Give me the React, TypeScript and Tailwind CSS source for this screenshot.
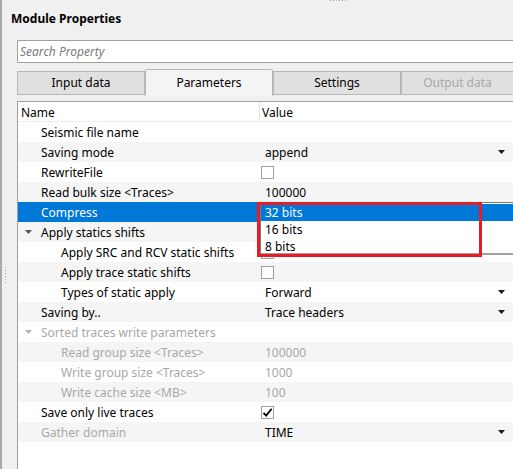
import React from "react";

type Row = {
  name: string;
  level?: number;
  value?: string;
  combo?: boolean;
  check?: boolean;
  arrow?: boolean;
  disabled?: boolean;
  nameDisabled?: boolean;
  selected?: boolean;
};

const rows: Row[] = [
  { name: "Seismic file name" },
  { name: "Saving mode", value: "append", combo: true },
  { name: "RewriteFile", check: false },
  { name: "Read bulk size <Traces>", value: "100000" },
  { name: "Compress", selected: true },
  { name: "Apply statics shifts", arrow: true },
  { name: "Apply SRC and RCV static shifts", level: 1, check: false },
  { name: "Apply trace static shifts", level: 1, check: false },
  { name: "Types of static apply", level: 1, value: "Forward", combo: true },
  { name: "Saving by..", value: "Trace headers", combo: true },
  { name: "Sorted traces write parameters", arrow: true, disabled: true },
  { name: "Read group size <Traces>", level: 1, value: "100000", disabled: true },
  { name: "Write group size <Traces>", level: 1, value: "1000", disabled: true },
  { name: "Write cache size <MB>", level: 1, value: "100", disabled: true },
  { name: "Save only live traces", check: true },
  { name: "Gather domain", value: "TIME", combo: true, nameDisabled: true },
];

const ComboArrow = () => (
  <svg width="7" height="4" viewBox="0 0 7 4" className="mr-[8px]">
    <path d="M0 0H7L3.5 4Z" fill="#1a1a1a" />
  </svg>
);

const Check = ({ on }: { on: boolean }) => (
  <div className="w-[13px] h-[13px] border border-[#a0a0a0] bg-white flex items-center justify-center">
    {on && (
      <svg width="11" height="11" viewBox="0 0 11 11">
        <path d="M1.5 5.8L4.2 8.6L9.6 1.8" fill="none" stroke="#000" strokeWidth="1.8" />
      </svg>
    )}
  </div>
);

const PropRow = ({ row, index }: { row: Row; index: number }) => {
  const bg = row.selected ? "bg-[#0078d7]" : index % 2 === 0 ? "bg-white" : "bg-[#f5f5f5]";
  const nameColor = row.selected
    ? "text-white"
    : row.disabled || row.nameDisabled
    ? "text-[#a8a8a8]"
    : "text-black";
  const valueColor = row.disabled ? "text-[#a8a8a8]" : "text-black";
  return (
    <div className={`flex h-[20px] ${bg}`}>
      <div className={`w-[242px] flex items-center ${nameColor}`}>
        <div className="w-[23px] flex items-center">
          {row.arrow && (
            <svg width="7" height="4" viewBox="0 0 7 4" className="ml-[7px]">
              <path d="M0 0H7L3.5 4Z" fill={row.disabled ? "#b0b0b0" : "#555"} />
            </svg>
          )}
        </div>
        {row.level === 1 && <div className="w-[20px]" />}
        <span className="whitespace-nowrap pt-[1px]">{row.name}</span>
      </div>
      <div className={`flex-1 flex items-center ${valueColor}`}>
        {row.check !== undefined ? (
          <div className="pl-[1px]">
            <Check on={row.check} />
          </div>
        ) : (
          <>
            <span className="pl-[5px] pt-[1px] flex-1 whitespace-nowrap">{row.value}</span>
            {row.combo && <ComboArrow />}
          </>
        )}
      </div>
    </div>
  );
};

const tabBase = "w-[128px] flex items-center justify-center text-[12px]";

export default function App() {
  return (
    <div
      className="relative w-[513px] h-[469px] overflow-hidden bg-[#f0f0f0] border-l-2 border-[#a8a8a8] flex flex-col"
      style={{ fontFamily: '"Noto Sans", "Open Sans", sans-serif' }}
    >
      {/* splitter handles */}
      <div className="absolute top-0 left-[328px] flex gap-[2px]">
        {[0, 1, 2, 3, 4, 5].map(i => (
          <div key={i} className="w-[1px] h-[1px] bg-[#a0a0a0]" />
        ))}
      </div>
      <div className="absolute top-[267px] left-[3px] flex flex-col gap-[2px]">
        {[0, 1, 2, 3, 4, 5].map(i => (
          <div key={i} className="w-[1px] h-[1px] bg-[#a0a0a0]" />
        ))}
      </div>

      <div className="h-[40px] pl-[9px] pt-[10px] text-[12px] font-bold text-black leading-[18px]">
        Module Properties
      </div>

      <div className="ml-[15px] flex-1 flex flex-col">
        <div className="h-[23px] bg-white border border-[#a0a0a0] rounded-l-[2px] border-r-0 flex items-center pl-[2px] text-[12px] italic text-[#7a7a7a]">
          Search Property
        </div>

        <div className="mt-[6px] h-[27px] flex items-end">
          <div className={`${tabBase} h-[24px] mb-[1px] bg-[#e0e0e0] border border-[#b8b8b8] text-black`}>
            Input data
          </div>
          <div className={`${tabBase} h-[27px] bg-[#f4f4f4] border border-b-0 border-[#b8b8b8] text-black rounded-t-[2px]`}>
            Parameters
          </div>
          <div className={`${tabBase} h-[24px] mb-[1px] bg-[#e0e0e0] border border-[#b8b8b8] text-black`}>
            Settings
          </div>
          <div className={`${tabBase} h-[24px] mb-[1px] bg-[#e0e0e0] border border-r-0 border-[#b8b8b8] text-[#a8a8a8] flex-1`}>
            Output data
          </div>
        </div>

        <div className="mt-[5px] flex-1 bg-white border-t border-l border-[#a0a0a0] text-[12px] leading-[20px]">
          <div className="flex h-[19px] leading-[19px] bg-white border-b border-[#ececec] box-content">
            <div className="w-[242px] pl-[3px] pt-[1px] border-r border-[#e0e0e0]">Name</div>
            <div className="flex-1 pl-[2px] pt-[1px]">Value</div>
          </div>
          {rows.map((r, i) => (
            <PropRow key={r.name} row={r} index={i} />
          ))}
        </div>
      </div>

      {/* open combo popup */}
      <div className="absolute left-[258px] top-[202px] w-[260px] h-[53px] bg-white border-l border-t border-[#7a7a7a] border-b-2 border-b-[#a0a0a0] text-[12px] flex flex-col pt-[1px]">
        <div className="h-[17px] bg-[#0078d7] text-white pl-[4px] flex items-center">32 bits</div>
        <div className="h-[17px] text-black pl-[4px] flex items-center">16 bits</div>
        <div className="h-[17px] text-black pl-[4px] flex items-center">8 bits</div>
      </div>
      <div className="absolute left-[255px] top-[202px] w-[225px] h-[55px] border-[3px] border-[#e81c25]" />
    </div>
  );
}
